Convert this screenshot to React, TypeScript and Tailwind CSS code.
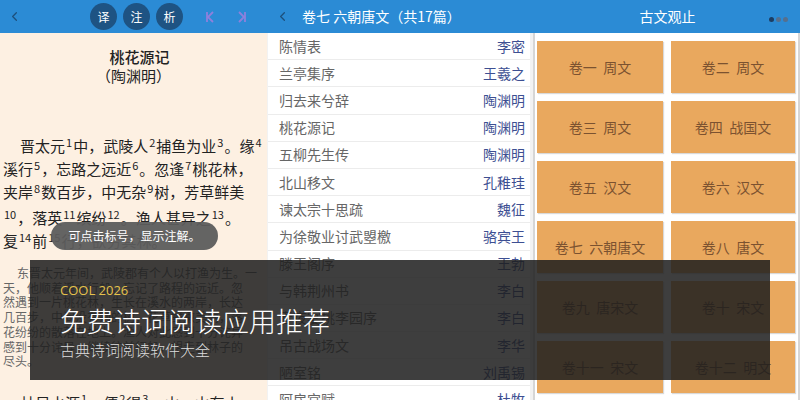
import React from "react";
import { ChevronLeft } from "lucide-react";

const poems = [
  ["陈情表", "李密"],
  ["兰亭集序", "王羲之"],
  ["归去来兮辞", "陶渊明"],
  ["桃花源记", "陶渊明"],
  ["五柳先生传", "陶渊明"],
  ["北山移文", "孔稚珪"],
  ["谏太宗十思疏", "魏征"],
  ["为徐敬业讨武曌檄", "骆宾王"],
  ["滕王阁序", "王勃"],
  ["与韩荆州书", "李白"],
  ["春夜宴桃李园序", "李白"],
  ["吊古战场文", "李华"],
  ["陋室铭", "刘禹锡"],
  ["阿房宫赋", "杜牧"],
];

const volumes = [
  "卷一  周文",
  "卷二  周文",
  "卷三  周文",
  "卷四  战国文",
  "卷五  汉文",
  "卷六  汉文",
  "卷七  六朝唐文",
  "卷八  唐文",
  "卷九  唐宋文",
  "卷十  宋文",
  "卷十一  宋文",
  "卷十二  明文",
];

const translation = [
  "东晋太元年间，武陵郡有个人以打渔为生。一",
  "天，他顺着溪水行船，忘记了路程的远近。忽",
  "然遇到一片桃花林，生长在溪水的两岸，长达",
  "几百步，中间没有别的树，花草鲜嫩美丽，落",
  "花纷纷的散落在地上。渔人对此感到十分诧异",
  "感到十分诧异，继续往前行船，想走到林子的",
  "尽头。",
];

function Sup({ n }: { n: number }) {
  return <sup className="text-[11px] px-[1px]">{n}</sup>;
}

function RoundBtn({ label }: { label: string }) {
  return (
    <div className="w-[27px] h-[27px] rounded-full bg-[#1e5383] flex items-center justify-center text-white text-[12px]">
      {label}
    </div>
  );
}

function Reader() {
  return (
    <div className="w-[267px] flex flex-col bg-[#fdf0e2] overflow-hidden">
      <div className="h-[33px] bg-[#2b8bd5] flex items-center shrink-0">
        <ChevronLeft className="ml-[7px] text-[#1d4f7c]" size={15} strokeWidth={2} />
        <div className="ml-[68px] flex gap-[6px]">
          <RoundBtn label="译" />
          <RoundBtn label="注" />
          <RoundBtn label="析" />
        </div>
        <svg className="ml-[22px]" width="10" height="12" viewBox="0 0 10 12" fill="none" stroke="#8e80dc" strokeWidth="1.8">
          <path d="M2 1v10M8 1L3 6l5 5" />
        </svg>
        <svg className="ml-[22px]" width="10" height="12" viewBox="0 0 10 12" fill="none" stroke="#8e80dc" strokeWidth="1.8">
          <path d="M8 1v10M2 1l5 5-5 5" />
        </svg>
      </div>
      <div className="text-center text-[#222] pt-[14px] pl-[12px]">
        <div className="text-[15px] leading-[20px] font-medium">桃花源记</div>
        <div className="text-[15px] leading-[18px] -ml-[12px]">（陶渊明）</div>
      </div>
      <div className="mt-[49px] px-[3px] text-[15px] leading-[23px] text-[#222] whitespace-nowrap">
        <div className="pl-[17px]">
          晋太元<Sup n={1} />中，武陵人<Sup n={2} />捕鱼为业<Sup n={3} />。缘<Sup n={4} />
        </div>
        <div>
          溪行<Sup n={5} />，忘路之远近<Sup n={6} />。忽逢<Sup n={7} />桃花林，
        </div>
        <div>
          夹岸<Sup n={8} />数百步，中无杂<Sup n={9} />树，芳草鲜美
        </div>
        <div className="mt-[3px]">
          <Sup n={10} />，落英<Sup n={11} />缤纷<Sup n={12} />。渔人甚异之<Sup n={13} />。
        </div>
        <div>
          复<Sup n={14} />前<Sup n={15} />行，欲穷其林。
        </div>
      </div>
      <div className="mt-[14px] px-[3px] text-[12px] leading-[14.7px] text-[#666] whitespace-nowrap">
        {translation.map((line, i) => (
          <div key={i} className={i === 0 ? "pl-[14px]" : ""}>
            {line}
          </div>
        ))}
      </div>
      <div className="mt-[22px] pl-[20px] text-[15px] leading-[23px] text-[#222] whitespace-nowrap">
        林尽水源<Sup n={1} />，便<Sup n={2} />得<Sup n={3} />一山，山有小
      </div>
    </div>
  );
}

function PoemList() {
  return (
    <div className="w-[268px] flex flex-col overflow-hidden">
      <div className="h-[33px] bg-[#2b8bd5] flex items-center shrink-0">
        <ChevronLeft className="ml-[8px] text-[#1d4f7c]" size={15} strokeWidth={2} />
        <span className="ml-[12px] text-white text-[14px]">卷七 六朝唐文（共17篇）</span>
      </div>
      <div className="flex-1 bg-[#f2f2f2] pl-[1px] pr-[3px] border-r-[2px] border-[#d6d6d6]">
        {poems.map(([title, author]) => (
          <div
            key={title}
            className="h-[27.2px] bg-white border-b border-[#ececec] flex items-center justify-between pl-[11px] pr-[5px] text-[14px]"
          >
            <span className="text-[#666]">{title}</span>
            <span className="text-[#3d4f92]">{author}</span>
          </div>
        ))}
      </div>
    </div>
  );
}

function Volumes() {
  return (
    <div className="flex-1 flex flex-col overflow-hidden">
      <div className="h-[33px] bg-[#2b8bd5] flex items-center justify-center relative shrink-0">
        <span className="text-white text-[14px]">古文观止</span>
        <div className="absolute right-[12px] top-[17px] flex gap-[2px]">
          <span className="w-[5px] h-[5px] rounded-full bg-[#1c3d63]" />
          <span className="w-[5px] h-[5px] rounded-full bg-[#566f8d]" />
          <span className="w-[5px] h-[5px] rounded-full bg-[#566f8d]" />
        </div>
      </div>
      <div className="flex-1 bg-white pt-[8px] pl-[2px] pr-[3px] grid grid-cols-[126px_124px] gap-[8px] content-start border-r-[2px] border-[#d6d6d6]">
        {volumes.map((v) => (
          <div
            key={v}
            className="h-[52px] bg-[#e9a85e] shadow-[1px_1px_1px_rgba(0,0,0,0.15)] flex items-center justify-center text-[14px] text-[#7b5230] whitespace-pre"
          >
            {v}
          </div>
        ))}
      </div>
    </div>
  );
}

export default function App() {
  return (
    <div className="w-[800px] h-[400px] relative overflow-hidden flex bg-white font-['Noto_Sans_CJK_SC',sans-serif]">
      <Reader />
      <PoemList />
      <Volumes />

      <div className="absolute left-[51px] top-[222px] w-[167px] h-[28px] rounded-full bg-[#5c5c5c]/95 flex items-center justify-center text-white text-[12px]">
        可点击标号，显示注解。
      </div>

      <div className="absolute left-[30px] top-[260px] w-[740px] h-[120px] bg-[#1e1e1e]/[0.86] pl-[30px] pt-[22px]">
        <div className="text-[13px] leading-[16px] text-[#e6c24c] font-['Open_Sans','Noto_Sans_CJK_SC',sans-serif]">
          COOL 2026
        </div>
        <div className="mt-[8px] text-[27px] leading-[30px] text-white font-light">免费诗词阅读应用推荐</div>
        <div className="mt-[5px] text-[15px] leading-[18px] text-[#dddddd] font-light">古典诗词阅读软件大全</div>
      </div>
    </div>
  );
}
